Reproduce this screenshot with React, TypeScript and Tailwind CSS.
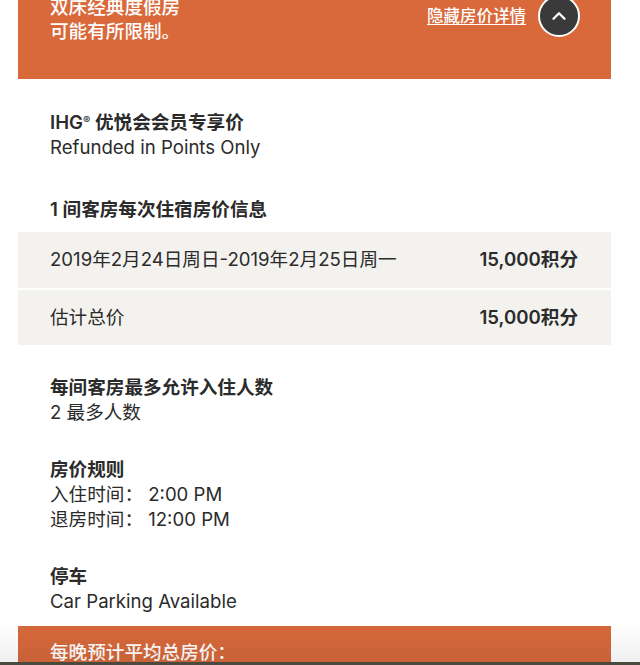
import { ChevronUp } from "lucide-react";

const font = {
  fontFamily: '"Inter", "Noto Sans CJK SC", sans-serif',
};

function Section({ title, lines }: { title: string; lines: string[] }) {
  return (
    <div>
      <h3 className="text-[18.6px] font-semibold leading-[25px] text-[#2b2b2b]">{title}</h3>
      {lines.map((l) => (
        <p key={l} className="text-[18.6px] leading-[25px] text-[#2b2b2b]">
          {l}
        </p>
      ))}
    </div>
  );
}

export default function App() {
  return (
    <div className="relative h-[665px] w-[640px] overflow-hidden bg-white" style={font}>
      <div className="ml-[18px] w-[593px]">
        {/* top banner */}
        <div className="flex h-[79px] items-start justify-between bg-[#d9693b] pl-8 pr-[31px]">
          <div className="-mt-[5px] text-[18.6px] font-medium leading-[24px] text-white">
            <p>双床经典度假房</p>
            <p>可能有所限制。</p>
          </div>
          <div className="-mt-[5px] flex items-center gap-3">
            <a className="text-[16.5px] font-medium text-white underline underline-offset-2">隐藏房价详情</a>
            <button className="flex size-[42px] items-center justify-center rounded-full border-2 border-white bg-[#3b3a3a] text-white">
              <ChevronUp className="size-[22px]" strokeWidth={2.6} />
            </button>
          </div>
        </div>

        <div className="pl-8 pt-[31px]">
          <h3 className="text-[18.6px] font-semibold leading-[25px] text-[#2b2b2b]">
            IHG<sup className="text-[11px]">®</sup> 优悦会会员专享价
          </h3>
          <p className="text-[18.6px] leading-[25px] text-[#2b2b2b]">Refunded in Points Only</p>
          <h3 className="mt-[37px] text-[18.6px] font-semibold leading-[25px] text-[#2b2b2b]">
            1 间客房每次住宿房价信息
          </h3>
        </div>

        <div className="mt-[10px] flex flex-col gap-[2px]">
          <div className="flex h-[56px] items-center justify-between bg-[#f3f2ee] pl-8 pr-[33px] text-[18.6px] text-[#2b2b2b]">
            <span>2019年2月24日周日-2019年2月25日周一</span>
            <span className="font-semibold">15,000积分</span>
          </div>
          <div className="flex h-[55px] items-center justify-between bg-[#f3f2ee] pl-8 pr-[33px] text-[18.6px] text-[#2b2b2b]">
            <span>估计总价</span>
            <span className="font-semibold">15,000积分</span>
          </div>
        </div>

        <div className="flex flex-col gap-[32px] pl-8 pt-[30px]">
          <Section title="每间客房最多允许入住人数" lines={["2 最多人数"]} />
          <Section title="房价规则" lines={["入住时间：  2:00 PM", "退房时间：  12:00 PM"]} />
          <Section title="停车" lines={["Car Parking Available"]} />
        </div>

        <div className="mt-[12px] h-[60px] bg-[#d6683b] pl-8 pt-[14px]">
          <p className="text-[18.6px] font-medium leading-[25px] text-white">每晚预计平均总房价：</p>
        </div>
      </div>

      <div className="pointer-events-none absolute inset-x-0 bottom-[3px] h-[40px] bg-gradient-to-b from-transparent to-black/[0.06]" />
      <div className="absolute inset-x-0 bottom-0 h-[3px] bg-[#4a4940]" />
    </div>
  );
}
